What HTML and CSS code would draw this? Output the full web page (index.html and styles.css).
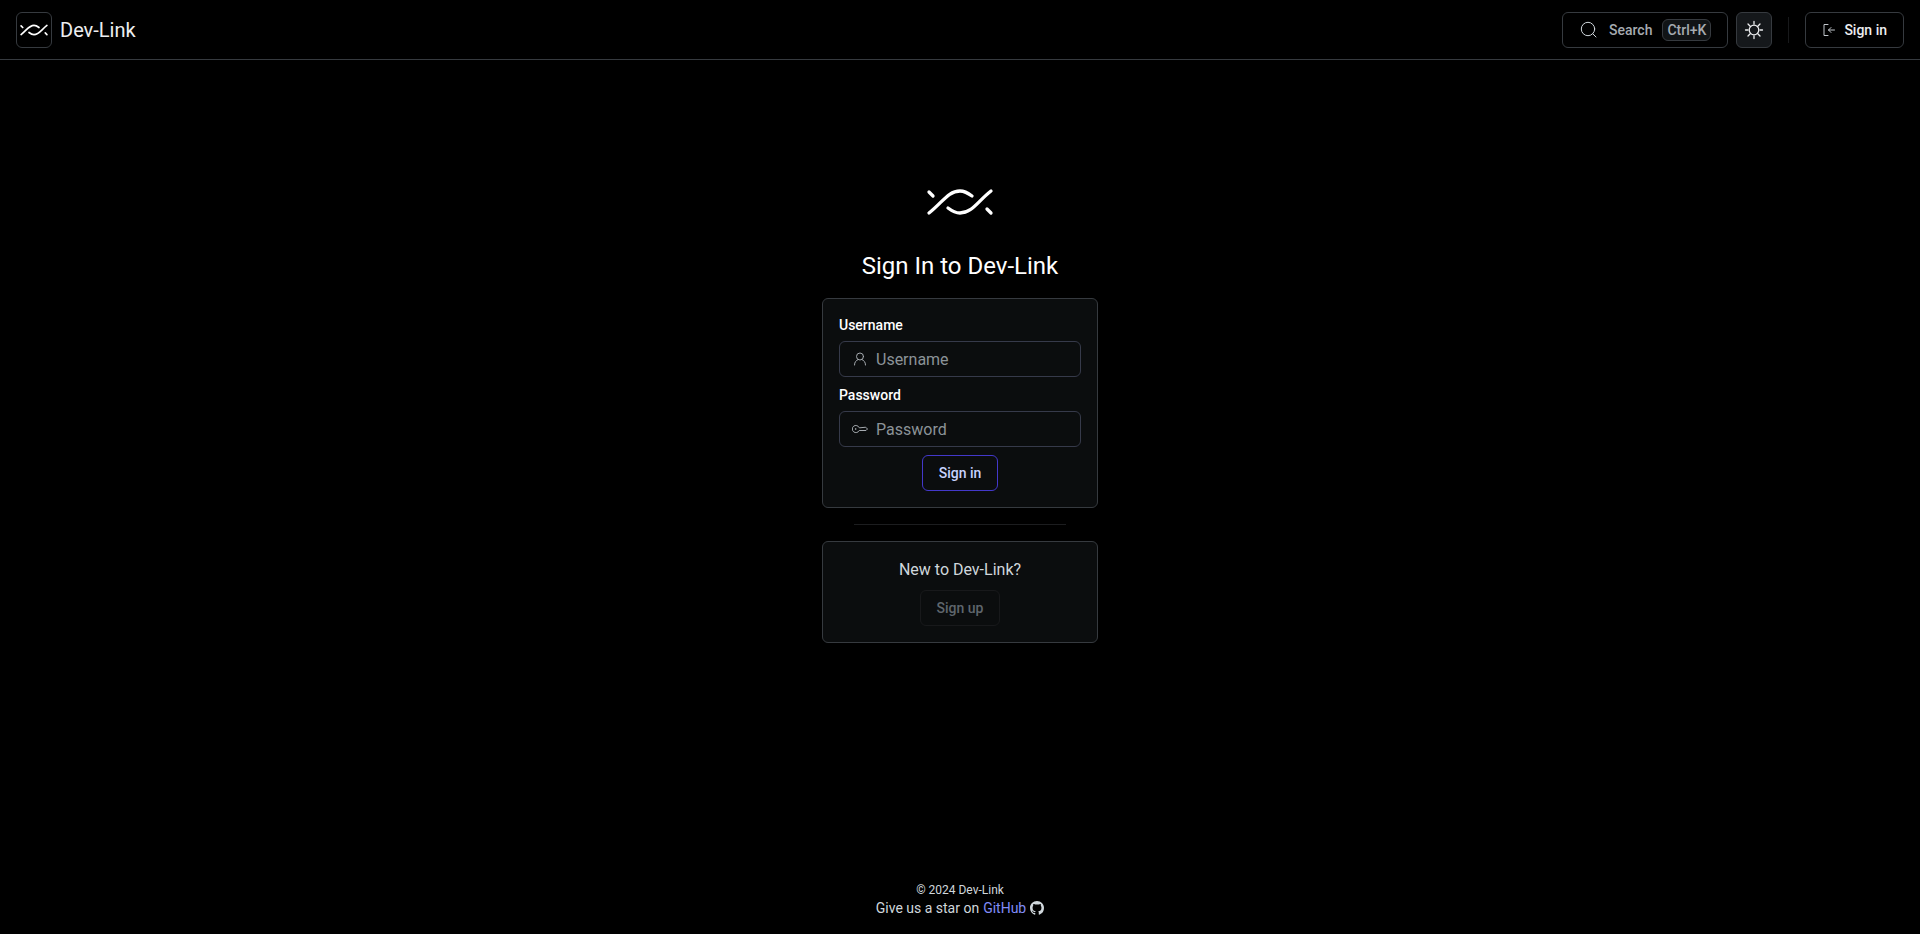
FILE: index.html
```html
<!DOCTYPE html>
<html lang="en">
<head>
<meta charset="UTF-8">
<meta name="viewport" content="width=device-width, initial-scale=1">
<title>Sign In | Dev-Link</title>
<link rel="stylesheet" href="styles.css">
</head>
<body>
<header class="navbar">
    <a class="brand" href="#">
        <span class="brand-icon">
            <svg width="30" height="30" viewBox="0 0 72 72" class="logo">
                <path d="M5 26l4 4M5 47C19 36 24 25 36 25c5 0 8 2 12 5M24 42c4 3 7 5 12 5 12 0 17-11 31-22M63 43l4 4"/>
            </svg>
        </span>
        <span class="brand-name">Dev-Link</span>
    </a>
    <div class="nav-actions">
        <button class="button search-button" type="button">
            <svg width="20" height="20" viewBox="0 0 20 20" class="icon">
                <circle cx="9" cy="9" r="6.7"/>
                <path d="M13.8 13.8L17 17"/>
            </svg>
            <span>Search</span>
            <kbd>Ctrl+K</kbd>
        </button>
        <button class="button theme-button" type="button" aria-label="Toggle theme">
            <svg width="20" height="20" viewBox="0 0 20 20" class="icon sun">
                <circle cx="10" cy="10" r="4.8"/>
                <path d="M10 1.5v2.5M10 16v2.5M1.5 10h2.5M16 10h2.5M4 4l2.2 2.2M13.8 13.8L16 16M4 16l2.2-2.2M13.8 6.2L16 4"/>
            </svg>
        </button>
        <span class="nav-divider"></span>
        <a class="button nav-sign-in" href="#">
            <svg width="14" height="14" viewBox="0 0 14 14" class="icon">
                <path d="M6 1.5H2v11h4M12.5 7H6.5M9 4.5L6.5 7 9 9.5"/>
            </svg>
            Sign in
        </a>
    </div>
</header>

<main class="content">
    <svg width="72" height="72" viewBox="0 0 72 72" class="logo">
        <path d="M5 26l4 4M5 47C19 36 24 25 36 25c5 0 8 2 12 5M24 42c4 3 7 5 12 5 12 0 17-11 31-22M63 43l4 4"/>
    </svg>
    <h1>Sign In to Dev-Link</h1>

    <form class="card">
        <div class="field">
            <label for="username">Username</label>
            <div class="input-box">
                <svg width="16" height="16" viewBox="0 0 16 16" class="icon">
                    <circle cx="8" cy="5.5" r="3.5"/>
                    <path d="M2.5 14c0-3 1.5-4.5 3.7-5.5M13.5 14c0-3-1.5-4.5-3.7-5.5"/>
                </svg>
                <input type="text" id="username" placeholder="Username">
            </div>
        </div>
        <div class="field">
            <label for="password">Password</label>
            <div class="input-box">
                <svg width="16" height="16" viewBox="0 0 16 16" class="icon">
                    <path d="M7.2 6.5A3.6 3.6 0 1 0 7.2 9.5H14L15.5 8 14 6.5z"/>
                    <circle cx="3.5" cy="8" r=".3"/>
                </svg>
                <input type="password" id="password" placeholder="Password">
            </div>
        </div>
        <button class="button primary-button" type="submit">Sign in</button>
    </form>

    <hr>

    <section class="card">
        <p>New to Dev-Link?</p>
        <button class="button" type="button" disabled>Sign up</button>
    </section>
</main>

<footer class="footer">
    <small>© 2024 Dev-Link</small>
    <p>
        Give us a star on <a href="#">GitHub</a>
        <svg width="14" height="14" viewBox="0 0 16 16" class="github">
            <path d="M8 0C3.58 0 0 3.58 0 8c0 3.54 2.29 6.53 5.47 7.59.4.07.55-.17.55-.38 0-.19-.01-.82-.01-1.49-2.01.37-2.53-.49-2.69-.94-.09-.23-.48-.94-.82-1.13-.28-.15-.68-.52-.01-.53.63-.01 1.08.58 1.23.82.72 1.21 1.87.87 2.33.66.07-.52.28-.87.51-1.07-1.78-.2-3.64-.89-3.64-3.95 0-.87.31-1.59.82-2.15-.08-.2-.36-1.02.08-2.12 0 0 .67-.21 2.2.82.64-.18 1.32-.27 2-.27s1.36.09 2 .27c1.53-1.04 2.2-.82 2.2-.82.44 1.1.16 1.92.08 2.12.51.56.82 1.27.82 2.15 0 3.07-1.87 3.75-3.65 3.95.29.25.54.73.54 1.48 0 1.07-.01 1.93-.01 2.2 0 .21.15.46.55.38A8.01 8.01 0 0 0 16 8c0-4.42-3.58-8-8-8z"/>
        </svg>
    </p>
</footer>
</body>
</html>
```

FILE: styles.css
```css
* {
    box-sizing: border-box;
}
body {
    margin: 0;
    min-height: 100vh;
    display: flex;
    flex-direction: column;
    background-color: #000;
    color: #d0d7dc;
    font-family: Roboto, sans-serif;
    font-size: 16px;
    line-height: 24px;
}
h1, p {
    margin: 0;
}
a {
    text-decoration: none;
}
svg {
    flex: none;
}
.icon, .logo {
    fill: none;
    stroke: currentColor;
    stroke-linecap: round;
}
.logo {
    color: #fff;
    stroke-width: 3.3;
}
.brand-icon .logo {
    stroke-width: 4;
}
.navbar {
    display: flex;
    justify-content: space-between;
    align-items: center;
    padding: 12px 16px 11px;
    border-bottom: 1px solid #363a3f;
}
.brand {
    display: flex;
    align-items: center;
    gap: 8px;
    color: #edeef0;
    font-size: 20px;
}
.brand-icon {
    display: flex;
    align-items: center;
    justify-content: center;
    width: 36px;
    height: 36px;
    border: 1px solid #363a3f;
    border-radius: 6px;
}
.nav-actions {
    display: flex;
    align-items: center;
    gap: 8px;
}
.button {
    display: flex;
    align-items: center;
    justify-content: center;
    height: 36px;
    padding: 0 16px 1px;
    border: 1px solid #363a3f;
    border-radius: 6px;
    background: transparent;
    color: #edeef0;
    font-family: inherit;
    font-size: 14px;
    font-weight: 500;
    line-height: 20px;
    cursor: pointer;
}
.button:disabled {
    border-color: #18191b;
    color: #5f666d;
    cursor: default;
}
.search-button {
    gap: 10px;
    color: #a6abb0;
}
.search-button .icon {
    color: #d0d7dc;
}
kbd {
    padding: 0 4px;
    border: 1px solid #363a3f;
    border-radius: 6px;
    background-color: #111416;
    font-family: inherit;
}
.theme-button {
    width: 36px;
    padding: 0;
    background-color: #15181b;
}
.sun {
    stroke-width: 1.3;
}
.nav-divider {
    width: 1px;
    height: 26px;
    margin: 0 8px;
    background-color: #18191b;
}
.nav-sign-in {
    gap: 8px;
}
.nav-sign-in .icon {
    color: #c0c5ca;
}
.content {
    flex: 1;
    display: flex;
    flex-direction: column;
    align-items: center;
    padding-top: 106px;
}
h1 {
    margin: 12px 0 16px;
    color: #fff;
    font-size: 24px;
    font-weight: 400;
    line-height: 32px;
}
.card {
    display: flex;
    flex-direction: column;
    align-items: center;
    gap: 8px;
    width: 276px;
    padding: 16px;
    border: 1px solid #363a3f;
    border-radius: 6px;
    background-color: #0b0d0e;
}
.field {
    display: flex;
    flex-direction: column;
    gap: 6px;
    width: 100%;
}
label {
    color: #fff;
    font-size: 14px;
    font-weight: 500;
    line-height: 20px;
}
.input-box {
    display: flex;
    align-items: center;
    gap: 8px;
    height: 36px;
    padding: 0 12px;
    border: 1px solid #363a4a;
    border-radius: 6px;
    color: #a6abb0;
}
input {
    flex: 1;
    min-width: 0;
    padding: 0;
    border: 0;
    outline: 0;
    background: transparent;
    color: #edeef0;
    font-family: inherit;
    font-size: 16px;
}
input::placeholder {
    color: #8b9398;
}
.primary-button {
    border-color: #4338ca;
    color: #c7d2fe;
}
hr {
    width: 212px;
    margin: 16px 0;
    border: 0;
    border-top: 1px solid #1c1d1f;
}
.footer {
    display: flex;
    flex-direction: column;
    align-items: center;
    padding-bottom: 16px;
}
.footer small {
    font-size: 12px;
    line-height: 16px;
}
.footer p {
    display: flex;
    align-items: center;
    gap: 4px;
    font-size: 14px;
    line-height: 20px;
}
.footer a {
    color: #818cf8;
}
.github {
    fill: currentColor;
}
```
